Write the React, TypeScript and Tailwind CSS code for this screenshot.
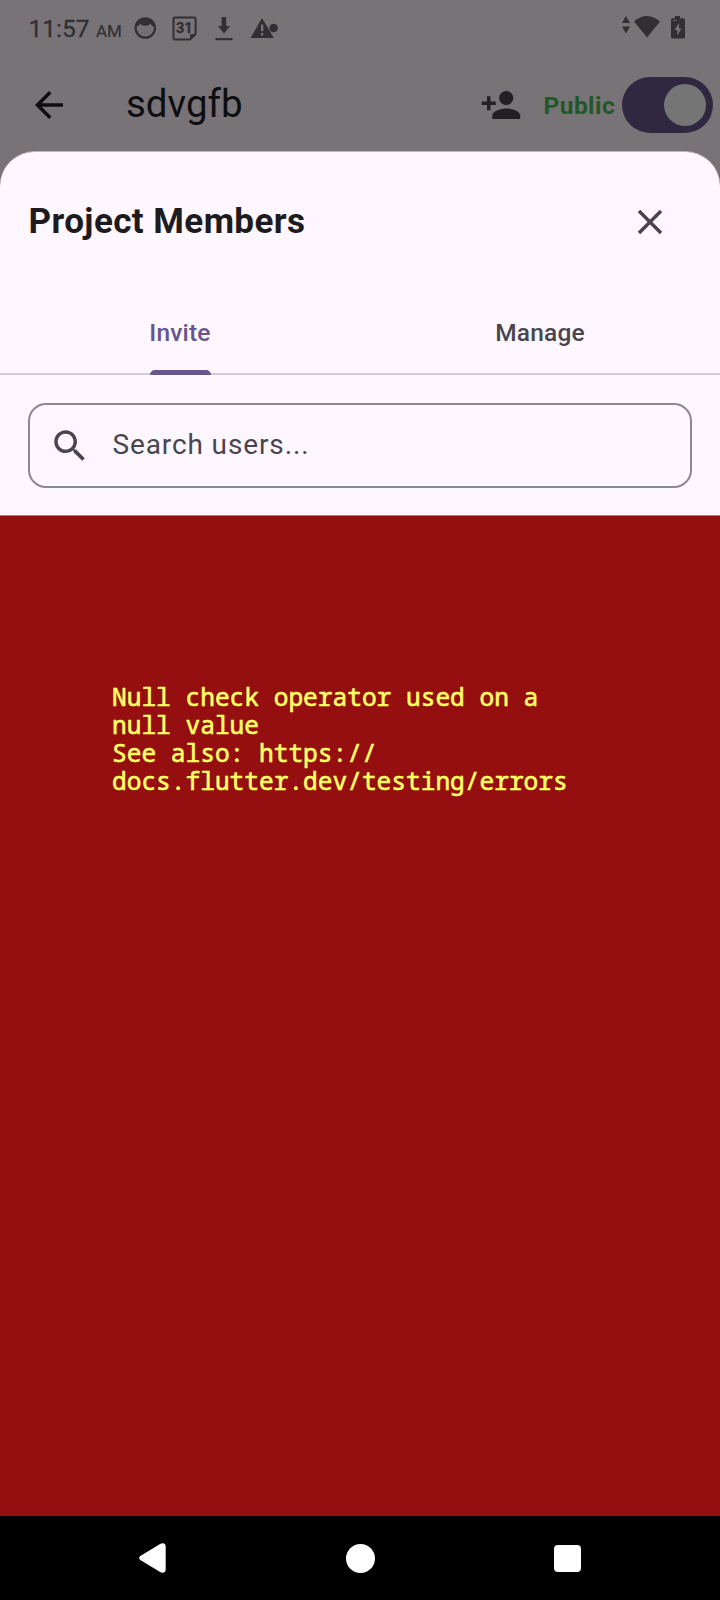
import type { ReactNode } from "react";

function MaterialIcon({ d, className }: { d: string; className?: string }) {
  return (
    <svg viewBox="0 0 24 24" className={`size-[42px] shrink-0 fill-current ${className ?? ""}`}>
      <path d={d} />
    </svg>
  );
}

const ICONS = {
  back: "M20 11H7.83l5.59-5.59L12 4l-8 8 8 8 1.41-1.41L7.83 13H20v-2z",
  personAdd:
    "M15 12c2.21 0 4-1.79 4-4s-1.79-4-4-4-4 1.79-4 4 1.79 4 4 4zm-9-2V7H4v3H1v2h3v3h2v-3h3v-2H6zm9 4c-2.67 0-8 1.34-8 4v2h16v-2c0-2.66-5.33-4-8-4z",
  close:
    "M19 6.41L17.59 5 12 10.59 6.41 5 5 6.41 10.59 12 5 17.59 6.41 19 12 13.41 17.59 19 19 17.59 13.41 12z",
  search:
    "M15.5 14h-.79l-.28-.27C15.41 12.59 16 11.11 16 9.5 16 5.91 13.09 3 9.5 3S3 5.91 3 9.5 5.91 16 9.5 16c1.61 0 3.09-.59 4.23-1.57l.27.28v.79l5 4.99L20.49 19l-4.99-5zm-6 0C7.01 14 5 11.99 5 9.5S7.01 5 9.5 5 14 7.01 14 9.5 11.99 14 9.5 14z",
};

function StatusBar() {
  return (
    <div className="flex h-14 items-center pl-7 text-[#312f33]">
      <span className="mt-[2px] w-[68px] pl-[0.5px] text-[24.5px] leading-none [-webkit-text-stroke:0.3px]">11:57</span>
      <span className="mt-[7px] w-[38px] text-[17px] leading-none [-webkit-text-stroke:0.2px]">AM</span>
      <svg viewBox="0 0 22 22" className="size-[22px]">
        <circle cx="11.300" cy="11" r="9.700" fill="none" stroke="#312f33" strokeWidth="2.200" />
        <path d="M2 9C3 4 7 1 11.300 1S19.500 4 20.500 9C18.500 10 17 8.500 16.700 6.500C15 8.800 13 8.800 11.300 8.800S7.500 8.800 6 6.500C5.600 8.500 4 10 2 9Z" fill="#312f33" />
        <path d="M5 11h1.500M10 10.500h1M15 11h1.500M4 14h1M8 13h1.500M12 13h1M16 14h1M7 16h1.500M11 17.500h1M14 17h1M10 15h1M13 15h1" stroke="#58545a" strokeWidth="1.200" />
      </svg>
      <svg viewBox="0 0 25 25" className="mt-px ml-4 size-[25px]">
        <path d="M3 1.400H22.300Q23.600 1.400 23.600 2.800V18L18 23.400H3Q1.500 23.400 1.500 22V2.800Q1.500 1.400 3 1.400Z" fill="none" stroke="#312f33" strokeWidth="2" />
        <path d="M23.600 18H19L18 19V23.400Z" fill="#312f33" />
        <text x="12.300" y="17" textAnchor="middle" fontSize="14.500" fontWeight="700" fill="#312f33" stroke="#312f33" strokeWidth="0.300">31</text>
      </svg>
      <svg viewBox="0 0 18 24" className="mt-px ml-[18px] h-6 w-[18px] fill-current">
        <path d="M6.600 0h4.600v9H15L9 16.500 3 9h3.600zM.5 21h17v2.200H.5z" />
      </svg>
      <svg viewBox="0 0 28 21" className="ml-[17px] h-[21px] w-7 fill-current">
        <path d="M12 0L23.800 20H.5z" />
        <circle cx="23.600" cy="10" r="4.300" />
        <path d="M11 6.500h2.300v6.500H11zM11 15h2.300v2.500H11z" fill="#787377" />
      </svg>
      <svg viewBox="0 0 64 26" className="ml-[344px] h-[26px] w-16 fill-current">
        <path d="M4 1L8 8H0zM0 11.500h8L4 18.500z" />
        <path d="M12 6.500Q24.500-4.500 38 6.500L25 22.500z" />
        <path d="M53 1h5v2.300h3Q63 3.300 63 5V22Q63 23.500 61.500 23.500H50.500Q49 23.500 49 22V5Q49 3.300 50.500 3.300H53z" />
        <path d="M57 8L52.500 15H55.200V20.500L59.500 13.500H57zM51 5.300h4v.7h-4z" fill="#787377" />
      </svg>
    </div>
  );
}

function AppBar() {
  return (
    <div className="flex h-[98px] items-center pl-7">
      <MaterialIcon d={ICONS.back} className="text-[#0e0e10]" />
      <h1 className="-mt-px ml-[56px] w-[354px] text-[38.5px] leading-none text-[#0e0e10]">sdvgfb</h1>
      <MaterialIcon d={ICONS.personAdd} className="text-[#222024]" />
      <span className="mt-[2px] ml-[21px] w-[79px] pl-[0.5px] text-[24.5px] leading-none font-bold tracking-[0.44px] text-[#245726]">Public</span>
      <div className="flex h-14 w-[91px] shrink-0 items-center justify-end rounded-full bg-[#302741] pr-[7px]">
        <div className="size-[42px] rounded-full bg-[#757575]" />
      </div>
    </div>
  );
}

function Tab({ active, children }: { active?: boolean; children: ReactNode }) {
  return (
    <div className="flex h-[83px] flex-1 flex-col items-center text-[24.5px] font-medium tracking-[0.175px]">
      <div className={`flex h-[80px] shrink-0 items-center pt-[6px] leading-none ${active ? "text-[#68548e]" : "text-[#49454f]"}`}>{children}</div>
      <div className={`relative h-[5px] w-[61px] shrink-0 rounded-t-[5px] ${active ? "bg-[#68548e]" : ""}`} />
    </div>
  );
}

export default function App() {
  return (
    <div className="flex h-[1600px] w-[720px] flex-col overflow-hidden bg-[#787377] font-['Roboto',sans-serif]">
      <header className="h-[151px] shrink-0">
        <StatusBar />
        <AppBar />
      </header>
      <main className="relative z-10 flex min-h-0 flex-1 flex-col overflow-hidden rounded-t-[35px] border-t border-[#bdb7bd] bg-[#fef7ff]">
        <div className="flex h-[138px] items-center justify-between pt-[2px] pr-[49px] pl-[28.5px] text-[#1d1b20]">
          <h2 className="-mt-[2px] text-[35px] leading-none font-bold tracking-[0.42px]">Project Members</h2>
          <MaterialIcon d={ICONS.close} className="text-[#49454f]" />
        </div>
        <div className="flex h-[85px] border-b-2 border-[#d0cad5]">
          <Tab active>Invite</Tab>
          <Tab>Manage</Tab>
        </div>
        <div className="flex h-[140px] flex-col px-7 pt-7">
          <div className="flex h-[85px] items-center rounded-[18px] border-2 border-[#8c8890] pt-px pl-[19px] text-[28px] tracking-[0.875px] text-[#49454f]">
            <MaterialIcon d={ICONS.search} />
            <span className="-mt-[2px] ml-[21.5px] leading-none">Search users...</span>
          </div>
        </div>
        <div className="flex-1 border-t border-[#bd7579] bg-[#950e10] px-28 pt-[167px]">
          <p className="text-[24.5px] leading-[28px] whitespace-pre text-[#ffff66] font-['Noto_Sans_Mono','DejaVu_Sans_Mono',monospace] [-webkit-text-stroke:0.6px_#ffff66]">
            {"Null check operator used on a\nnull value\nSee also: https://\ndocs.flutter.dev/testing/errors"}
          </p>
        </div>
      </main>
      <nav className="flex h-[84px] items-center bg-black pl-[139px] text-white">
        <svg viewBox="0 0 28 30" className="h-[30px] w-7 fill-current">
          <path d="M1.300 13Q-1 15 1.300 17L21.500 29.300Q26.700 31 26.700 26V4Q26.700-1 21.500.7Z" />
        </svg>
        <div className="ml-[179px] size-[29px] rounded-full bg-white" />
        <div className="ml-[179px] size-[27px] rounded-[4px] bg-white" />
      </nav>
    </div>
  );
}
